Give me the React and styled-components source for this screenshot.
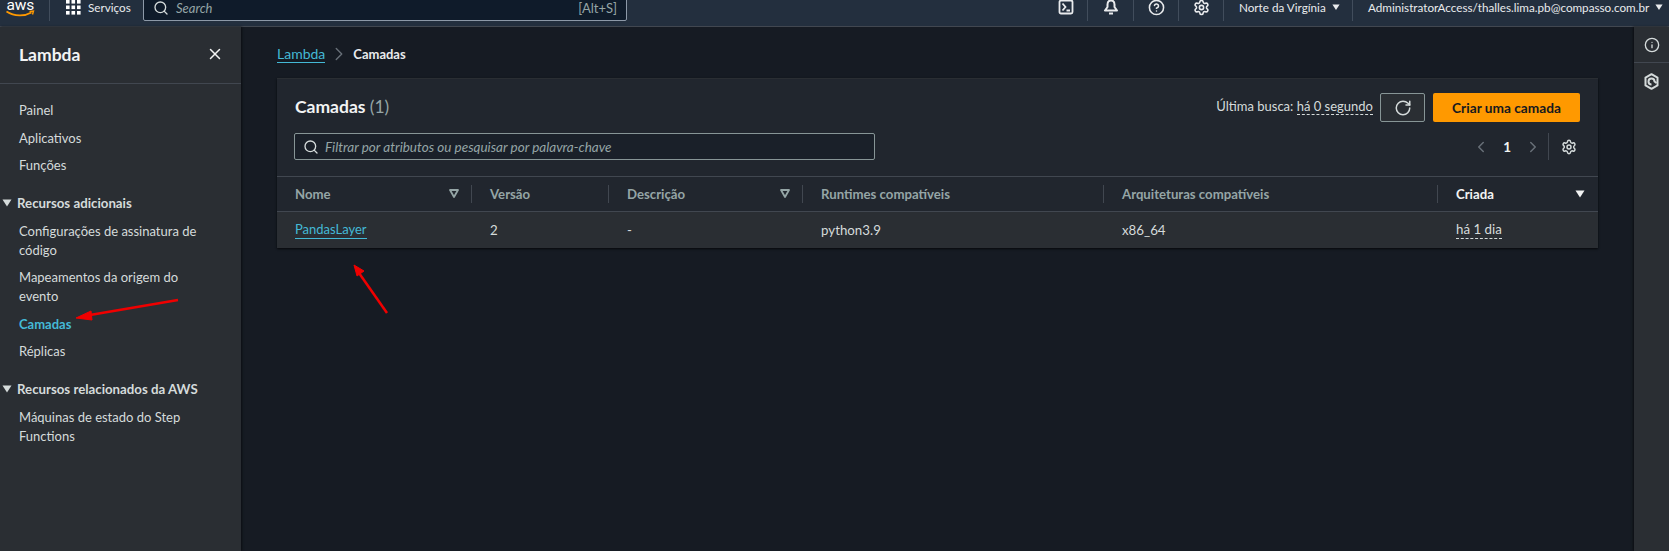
import React from "react";
import styled, { createGlobalStyle } from "styled-components";
import { Search, RotateCw, Settings, ChevronLeft, ChevronRight, X, CircleHelp, Info } from "lucide-react";

const FONT = `Lato, Roboto, "Liberation Sans", sans-serif`;

const GlobalStyle = createGlobalStyle`
  html, body { margin: 0; padding: 0; height: 100%; background: #161b23; overflow: hidden; }
  #root { height: 100%; }
  * { box-sizing: border-box; }
  body { font-family: ${FONT}; font-size: 13px; color: #d5dbdb; }
  svg { flex-shrink: 0; }
`;

const Page = styled.div`
  position: relative;
  width: 1669px;
  height: 551px;
  overflow: hidden;
  display: flex;
  flex-direction: column;
`;

const TopBar = styled.header`
  flex: 0 0 27px;
  height: 27px;
  background: #232f3e;
  border-bottom: 1px solid #414750;
  display: flex;
  align-items: flex-end;
  padding: 0 0 5px 6px;
  overflow: hidden;
  color: #e9ebed;
  font-size: 11.7px;
`;

const TopItem = styled.div`
  height: 22px;
  flex: 0 0 auto;
  display: flex;
  align-items: center;
  justify-content: ${(p) => (p.$start ? "flex-start" : "center")};
  width: ${(p) => (p.$w ? `${p.$w}px` : "auto")};
  border-left: ${(p) => (p.$sep ? "1px solid #414d5c" : "none")};
  gap: ${(p) => (p.$gap ? `${p.$gap}px` : "6px")};
  padding: 0 0 6px ${(p) => (p.$start ? `${p.$start}px` : "0")};
`;

const Logo = styled.div`
  width: 43px;
  height: 22px;
  flex: 0 0 auto;
`;

const SearchBox = styled.div`
  flex: 0 0 auto;
  width: 484px;
  height: 36px;
  margin: 0 0 0 14px;
  background: #0f1b2a;
  border: 1px solid #8d99a8;
  border-radius: 2px;
  display: flex;
  align-items: flex-end;
  justify-content: space-between;
  padding: 0 9px 4px 9px;
  color: #95a5a6;
  font-size: 13px;
  align-self: flex-end;
`;

const SearchLeft = styled.span`
  display: flex;
  align-items: center;
  gap: 7px;
  font-style: italic;
`;

const Spacer = styled.div`
  flex: 1;
`;

const Body = styled.div`
  flex: 1;
  display: flex;
  min-height: 0;
`;

const Sidebar = styled.nav`
  flex: 0 0 241px;
  background: #2a2e33;
  box-shadow: 1px 0 2px #0b0e12;
`;

const SideHead = styled.div`
  height: 57px;
  border-bottom: 1px solid #414750;
  display: flex;
  align-items: center;
  justify-content: space-between;
  padding: 0 17px 2px 19px;
  font-size: 17.5px;
  font-weight: 700;
  color: #f2f3f3;
`;

const SideList = styled.ul`
  list-style: none;
  margin: 0;
  padding: 17px 32px 0 19px;
`;

const SideLink = styled.li`
  line-height: 19px;
  margin-bottom: 8.5px;
  color: ${(p) => (p.$active ? "#44b9d6" : "#d5dbdb")};
  font-weight: ${(p) => (p.$active ? 700 : 400)};
`;

const SideSection = styled.li`
  display: flex;
  align-items: center;
  gap: 5px;
  padding: 10px 0 0 0;
  margin: 0 0 9px -17px;
  line-height: 19px;
  font-size: 13.25px;
  font-weight: 700;
  white-space: nowrap;
  color: #d5dbdb;
`;

const Main = styled.main`
  flex: 1;
  padding: 17px 36px 0 36px;
  min-width: 0;
`;

const Crumbs = styled.div`
  height: 20px;
  display: flex;
  align-items: center;
  gap: 3px;
  color: #d5dbdb;
  font-size: 13px;
  margin-bottom: 14px;
`;

const Link = styled.a`
  color: #44b9d6;
  border-bottom: 1px solid #44b9d6;
  line-height: 17px;
  font-size: ${(p) => (p.$small ? "13px" : "14px")};
`;

const Current = styled.span`
  font-weight: 700;
  color: #e9ebed;
`;

const Card = styled.section`
  background: #21262e;
  border-top: 1px solid #2a2e33;
  box-shadow: 0 1px 2px #06080b;
  width: 1321px;
`;

const CardHead = styled.div`
  height: 97px;
  padding: 14px 18px 0 17px;
  display: grid;
  grid-template-columns: 1fr auto;
  grid-template-rows: 29px 27px;
  row-gap: 11px;
  align-items: center;
`;

const Title = styled.h1`
  margin: 0 0 3px 1px;
  font-size: 17.5px;
  font-weight: 700;
  color: #f2f3f3;
`;

const Count = styled.span`
  font-weight: 400;
  color: #95a5a6;
`;

const Actions = styled.div`
  display: flex;
  align-items: center;
`;

const Dotted = styled.span`
  border-bottom: 1px dashed #d5dbdb;
  line-height: 17px;
`;

const LastFetch = styled.span`
  color: #d5dbdb;
  font-size: 13px;
  margin: 0 7px 3px 0;
`;

const RefreshButton = styled.button`
  width: 45px;
  height: 29px;
  background: #2a2e33;
  border: 1px solid #879596;
  border-radius: 2px;
  color: #d5dbdb;
  display: flex;
  align-items: center;
  justify-content: center;
  padding: 0;
  margin-right: 8px;
`;

const PrimaryButton = styled.button`
  width: 147px;
  height: 29px;
  background: #ff9900;
  border: none;
  border-radius: 2px;
  color: #16191f;
  font: 700 13.7px ${FONT};
  padding: 0 0 1px;
`;

const FilterBox = styled.div`
  width: 581px;
  height: 27px;
  background: #1a2029;
  border: 1px solid #879596;
  border-radius: 2px;
  display: flex;
  align-items: center;
  gap: 6px;
  padding: 0 8px;
  color: #95a5a6;
  font-style: italic;
  font-size: 13.5px;
`;

const Pager = styled.div`
  display: flex;
  align-items: center;
  justify-self: end;
  height: 27px;
  color: #687078;
`;

const PageNumber = styled.span`
  color: #f2f3f3;
  font-weight: 700;
  font-size: 13.5px;
  margin: 0 13px 0 13px;
`;

const PagerGear = styled.span`
  display: flex;
  align-items: center;
  height: 27px;
  margin-left: 6px;
  padding-left: 12px;
  margin-right: 3px;
  border-left: 1px solid #414750;
  color: #d5dbdb;
`;

const TableRow = styled.div`
  display: grid;
  grid-template-columns: 195px 137px 194px 301px 334px 160px;
  border-top: 1px solid #414750;
  height: ${(p) => (p.$body ? "37px" : "35px")};
  background: ${(p) => (p.$body ? "#2a2e33" : "transparent")};
`;

const HeadCell = styled.div`
  position: relative;
  display: flex;
  align-items: center;
  justify-content: space-between;
  padding: 0 13px 1px 18px;
  font-weight: 700;
  font-size: 13.2px;
  color: ${(p) => (p.$on ? "#f2f3f3" : "#95a5a6")};
  &::before {
    content: "";
    display: ${(p) => (p.$first ? "none" : "block")};
    position: absolute;
    left: -1px;
    top: 8px;
    height: 18px;
    border-left: 1px solid #414750;
  }
`;

const Cell = styled.div`
  display: flex;
  align-items: center;
  padding: 0 0 1px 18px;
  color: #d5dbdb;
  font-size: 13.3px;
`;

const RailColumn = styled.aside`
  flex: 0 0 35px;
  background: #2a2e33;
  box-shadow: -1px 0 2px #0b0e12;
  color: #d5dbdb;
`;

const RailButton = styled.div`
  height: ${(p) => (p.$h ? `${p.$h}px` : "37px")};
  display: flex;
  align-items: center;
  justify-content: center;
  border-bottom: ${(p) => (p.$line ? "1px solid #414750" : "none")};
`;

// the red annotation arrows were painted over the screenshot
const Annotation = styled.svg`
  position: absolute;
  left: 0;
  top: 0;
  pointer-events: none;
`;

const Caret = ({ size = 10, color = "currentColor" }) => (
  <svg width={size} height={size * 0.8} viewBox="0 0 10 8">
    <path d="M0.5 0.5h9L5 7.5z" fill={color} />
  </svg>
);

const SortIcon = () => (
  <svg width="10" height="9" viewBox="0 0 10 9">
    <path d="M1 1h8L5 8z" fill="none" stroke="#95a5a6" strokeWidth="1.8" strokeLinejoin="round" />
  </svg>
);

const GridIcon = () => (
  <svg width="15" height="15" viewBox="0 0 15 15" fill="#fff">
    {[0, 5.5, 11].flatMap((x) =>
      [0, 5.5, 11].map((y) => <rect key={`${x}-${y}`} x={x} y={y} width="3.6" height="3.6" />)
    )}
  </svg>
);

const AwsLogo = () => (
  <svg width="30" height="22" viewBox="0 0 30 22" style={{ overflow: "visible" }}>
    <text x="0.5" y="10.5" fontFamily="Roboto, sans-serif" fontSize="15.5" fill="#fff" letterSpacing="-0.2">aws</text>
    <path d="M0.5 12.5c8 5 18 5 25 1" fill="none" stroke="#ff9900" strokeWidth="1.8" />
    <path d="M23.5 12.5l4-0.5-1 3.5" fill="none" stroke="#ff9900" strokeWidth="1.4" />
  </svg>
);

const TerminalIcon = () => (
  <svg width="16" height="16" viewBox="0 0 16 16" fill="none" stroke="currentColor" strokeWidth="1.8">
    <rect x="1.5" y="1.5" width="13" height="13" rx="1.5" />
    <path d="M4.5 4.5L7.5 8l-3 3.5M8.5 11.5h3.5" />
  </svg>
);

const BellIcon = () => (
  <svg width="16" height="16" viewBox="0 0 16 16" fill="none" stroke="currentColor" strokeWidth="2" strokeLinejoin="round">
    <path d="M8 1.5c-2.4 0-3.5 1.8-3.5 4v2.5L2 11.5h12L11.5 8V5.5c0-2.2-1.1-4-3.5-4z" />
    <path d="M6 14.5h4" />
  </svg>
);

const HexIcon = () => (
  <svg width="15" height="17" viewBox="0 0 15 17" fill="none" stroke="currentColor" strokeWidth="2" strokeLinejoin="round">
    <path d="M7.5 1.2l6 3.4v7.8l-6 3.4-6-3.4V4.6z" />
    <path d="M4.5 8.5a3 3 0 0 1 6 0l2 1.5M4.5 8.5a3 3 0 0 0 3 3" />
  </svg>
);

const App = () => (
  <Page>
    <GlobalStyle />
    <TopBar>
      <Logo><AwsLogo /></Logo>
      <TopItem $sep $w={80} $start={16} $gap={7}>
        <GridIcon />
        <span>Serviços</span>
      </TopItem>
      <SearchBox>
        <SearchLeft><Search size={16} color="#d5dbdb" />Search</SearchLeft>
        <span>[Alt+S]</span>
      </SearchBox>
      <Spacer />
      <TopItem $w={43}><TerminalIcon /></TopItem>
      <TopItem $sep $w={46}><BellIcon /></TopItem>
      <TopItem $sep $w={45}><CircleHelp size={17} strokeWidth={2.2} /></TopItem>
      <TopItem $sep $w={45}><Settings size={17} strokeWidth={2.2} /></TopItem>
      <TopItem $sep $w={129} $start={15}>Norte da Virgínia <Caret size={8} /></TopItem>
      <TopItem $sep $w={317} $start={15}>AdministratorAccess/thalles.lima.pb@compasso.com.br <Caret size={8} /></TopItem>
    </TopBar>
    <Body>
      <Sidebar>
        <SideHead>Lambda <X size={18} /></SideHead>
        <SideList>
          <SideLink>Painel</SideLink>
          <SideLink>Aplicativos</SideLink>
          <SideLink>Funções</SideLink>
          <SideSection><Caret size={10} />Recursos adicionais</SideSection>
          <SideLink>Configurações de assinatura de código</SideLink>
          <SideLink>Mapeamentos da origem do evento</SideLink>
          <SideLink $active>Camadas</SideLink>
          <SideLink>Réplicas</SideLink>
          <SideSection><Caret size={10} />Recursos relacionados da AWS</SideSection>
          <SideLink>Máquinas de estado do Step Functions</SideLink>
        </SideList>
      </Sidebar>
      <Main>
        <Crumbs>
          <Link>Lambda</Link>
          <ChevronRight size={22} strokeWidth={1.5} color="#687078" />
          <Current>Camadas</Current>
        </Crumbs>
        <Card>
          <CardHead>
            <Title>Camadas <Count>(1)</Count></Title>
            <Actions>
              <LastFetch>Última busca: <Dotted>há 0 segundo</Dotted></LastFetch>
              <RefreshButton><RotateCw size={18} /></RefreshButton>
              <PrimaryButton>Criar uma camada</PrimaryButton>
            </Actions>
            <FilterBox><Search size={16} color="#d5dbdb" />Filtrar por atributos ou pesquisar por palavra-chave</FilterBox>
            <Pager>
              <ChevronLeft size={18} />
              <PageNumber>1</PageNumber>
              <ChevronRight size={18} />
              <PagerGear><Settings size={16} strokeWidth={2.2} /></PagerGear>
            </Pager>
          </CardHead>
          <TableRow>
            <HeadCell $first>Nome <SortIcon /></HeadCell>
            <HeadCell>Versão</HeadCell>
            <HeadCell>Descrição <SortIcon /></HeadCell>
            <HeadCell>Runtimes compatíveis</HeadCell>
            <HeadCell>Arquiteturas compatíveis</HeadCell>
            <HeadCell $on>Criada <Caret size={10} color="#f2f3f3" /></HeadCell>
          </TableRow>
          <TableRow $body>
            <Cell><Link $small>PandasLayer</Link></Cell>
            <Cell>2</Cell>
            <Cell>-</Cell>
            <Cell>python3.9</Cell>
            <Cell>x86_64</Cell>
            <Cell><Dotted>há 1 dia</Dotted></Cell>
          </TableRow>
        </Card>
      </Main>
      <RailColumn>
        <RailButton $h={36} $line><Info size={16} /></RailButton>
        <RailButton><HexIcon /></RailButton>
      </RailColumn>
    </Body>
    <Annotation width="1669" height="551" viewBox="0 0 1669 551">
      <path d="M178 300L90 315" stroke="#f00000" strokeWidth="2.5" fill="none" />
      <path d="M76 318l15-7 1 9z" fill="#f00000" stroke="#f00000" strokeWidth="1" />
      <path d="M387 313L359 273" stroke="#f00000" strokeWidth="2.5" fill="none" />
      <path d="M354 265l10 6-7 5z" fill="#f00000" stroke="#f00000" strokeWidth="1" />
    </Annotation>
  </Page>
);

export default App;
